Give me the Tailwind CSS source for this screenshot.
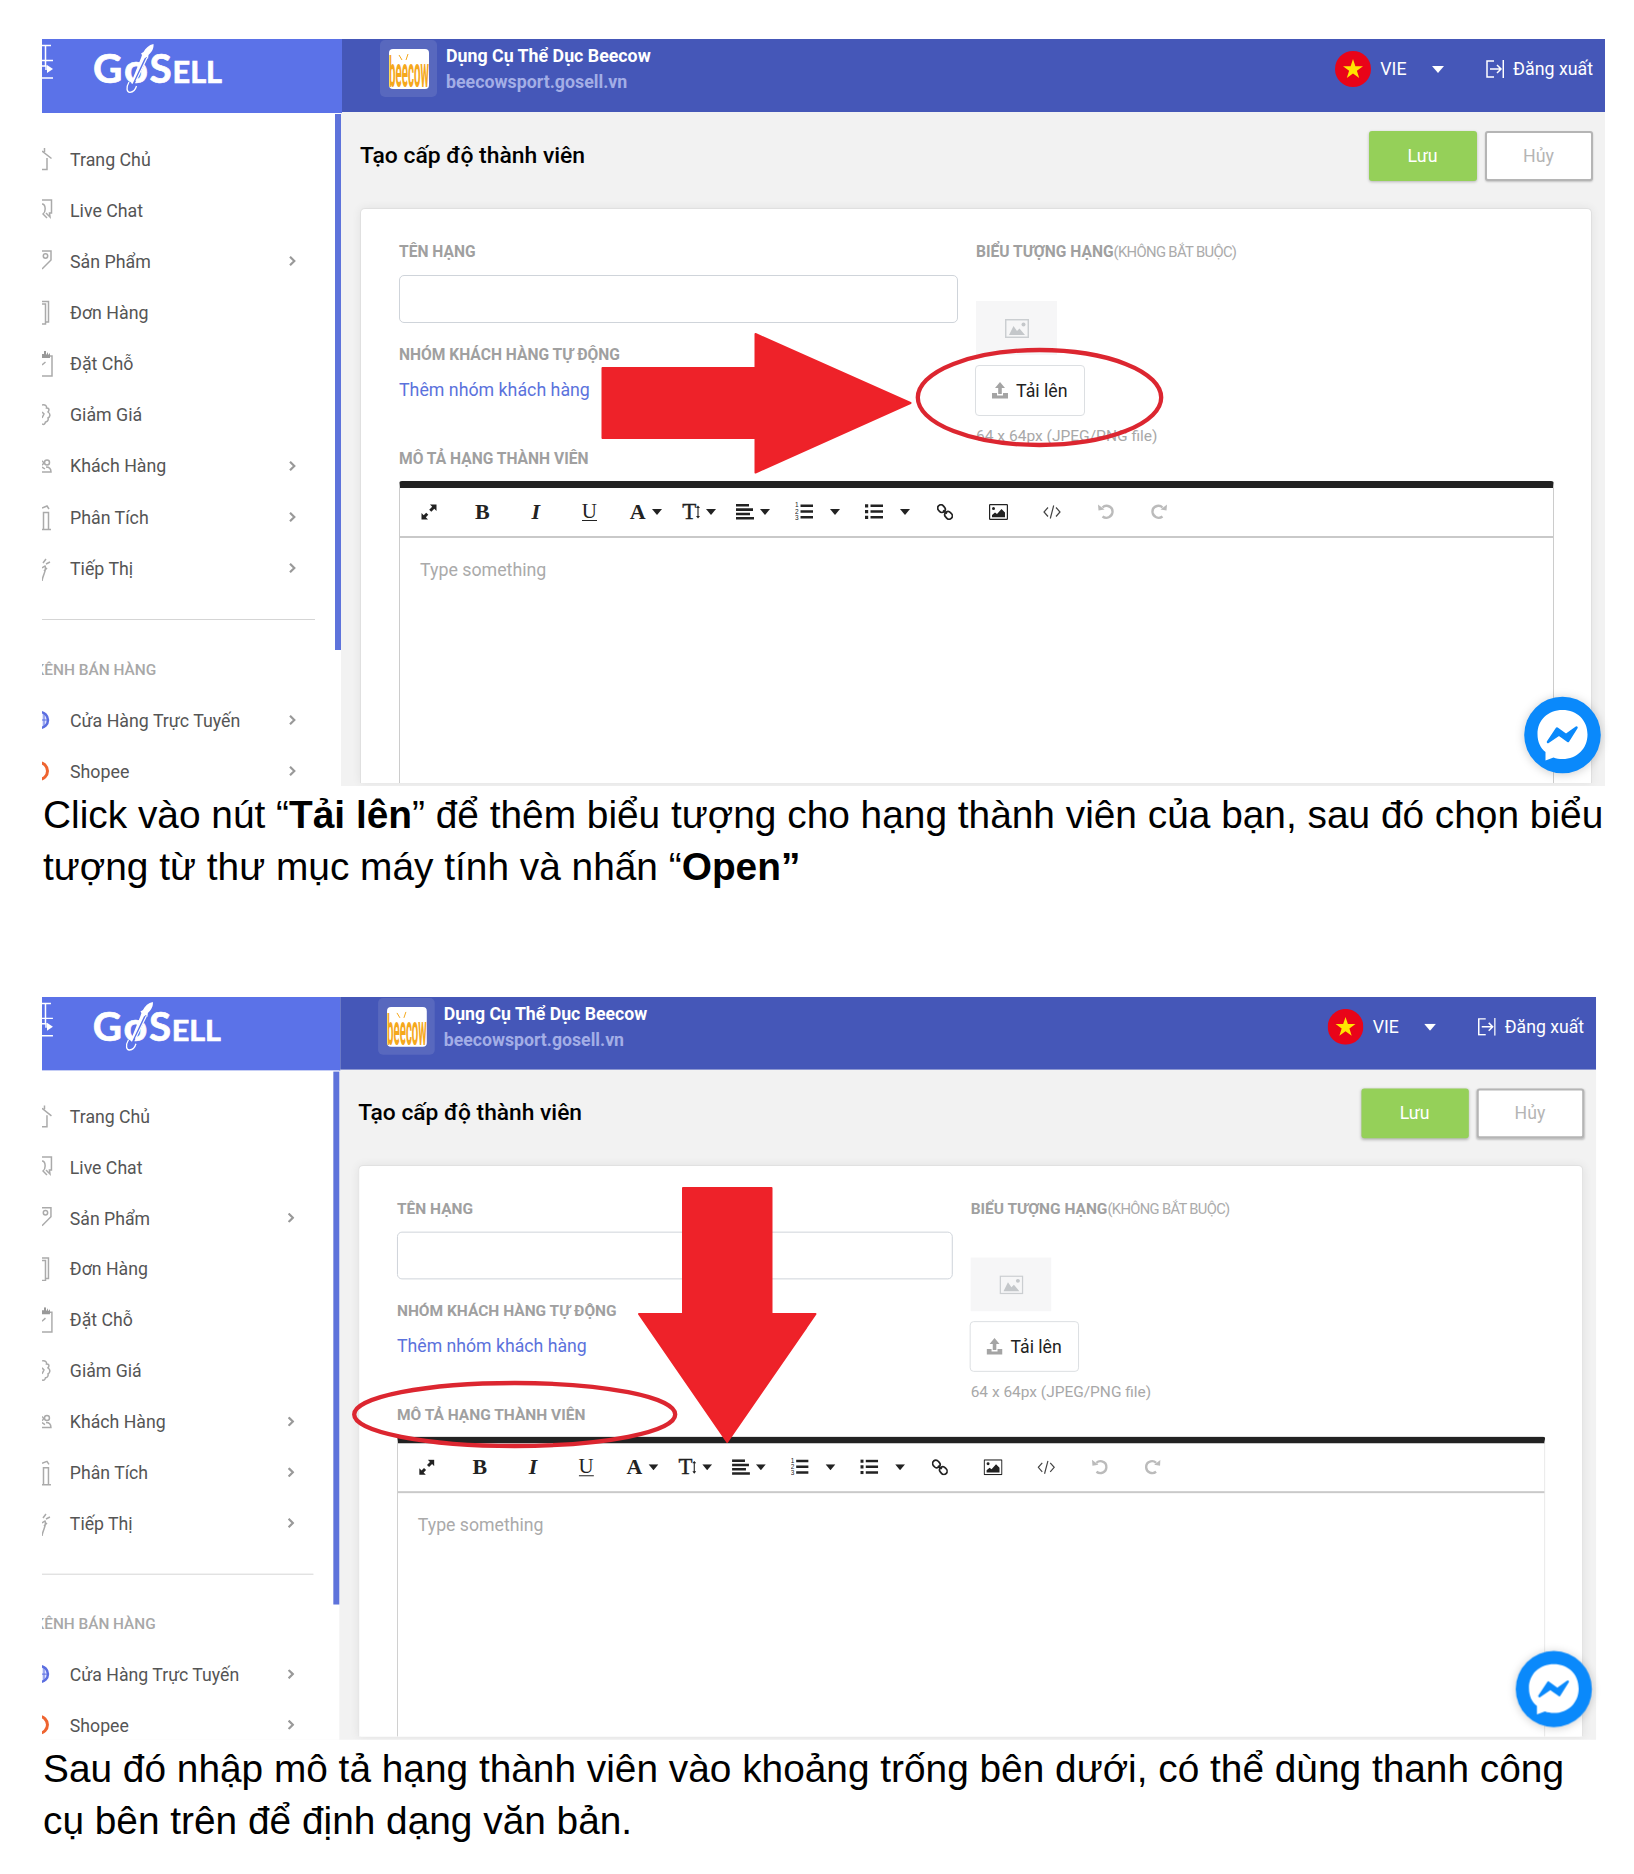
<!DOCTYPE html>
<html lang="vi">
<head>
<meta charset="utf-8">
<title>GoSell - Tạo cấp độ thành viên</title>
<script src="https://cdn.jsdelivr.net/npm/@tailwindcss/browser@4"></script>
</head>
<body class="bg-white w-[1634px] h-[1874px] overflow-hidden">
<main class="flex flex-col pt-[39px] pl-[42px]">

  <section class="relative w-[1563px] h-[747px]">
    <div data-screen></div>
    <svg class="absolute inset-0 w-[1563px] h-[747px]" viewBox="42 39 1563 747">
      <path d="M602.500 368 H755.500 V334 L910.500 403 L755.500 472.500 V438 H602.500Z" fill="#ee2229" stroke="#ee2229" stroke-width="2" stroke-linejoin="round"/>
      <ellipse cx="1039.500" cy="397.500" rx="121.700" ry="47.500" fill="none" stroke="#dc2630" stroke-width="4.300"/>
    </svg>
  </section>

  <p class="mt-[3px] ml-[1px] h-[103px] whitespace-nowrap font-['Liberation_Sans',sans-serif] text-[38.840px] leading-[51.500px] text-black">Click vào nút “<b>Tải lên</b>” để thêm biểu tượng cho hạng thành viên của bạn, sau đó chọn biểu<br>tượng từ thư mục máy tính và nhấn “<b>Open”</b></p>

  <section class="relative mt-[105px] w-[1554px] h-[743px]">
    <div class="origin-top-left scale-[0.9943]" data-screen></div>
    <svg class="absolute inset-0 w-[1554px] h-[743px]" viewBox="42 997 1554 743">
      <ellipse cx="514.700" cy="1414.500" rx="160.500" ry="31.500" fill="none" stroke="#dc2630" stroke-width="4.300"/>
      <path d="M683 1188 H771.500 V1314 H815.500 L727.200 1442 L639 1314 H683Z" fill="#ee2229" stroke="#ee2229" stroke-width="2" stroke-linejoin="round"/>
    </svg>
  </section>

  <p class="mt-[3px] ml-[1px] h-[103px] whitespace-nowrap font-['Liberation_Sans',sans-serif] text-[38.820px] leading-[51.500px] text-black">Sau đó nhập mô tả hạng thành viên vào khoảng trống bên dưới, có thể dùng thanh công<br>cụ bên trên để định dạng văn bản.</p>
</main>

<template id="screen">
  <div class="flex w-[1563px] h-[747px] overflow-hidden bg-[#f2f2f2] font-[Roboto,sans-serif] text-[17.800px] leading-5">
    <!-- sidebar -->
    <aside class="w-[300px] shrink-0 flex flex-col">
      <div class="h-[74px] shrink-0 bg-[#5b72e8]">
        <svg class="w-[200px] h-[74px]" viewBox="0 0 200 74" fill="#fff">
          <g stroke="#fff" stroke-width="1.500" fill="none">
            <path d="M0 6.500H9M3.500 6.500V27M0 21.500H11M0 39H11M0 27H4V31"/>
          </g>
          <path d="M5 26L11 30L5 34Z"/>
          <g font-family="Lato, sans-serif" font-weight="700" stroke="#fff" stroke-width="0.700">
            <text x="51" y="44.300" font-size="40.500">G</text>
            <text x="82" y="44.300" font-size="40.500" textLength="24" lengthAdjust="spacingAndGlyphs">o</text>
            <text x="107.500" y="44.300" font-size="40.500">S</text>
            <text x="130.500" y="44.300" font-size="29.500" textLength="49.500" lengthAdjust="spacingAndGlyphs">ELL</text>
          </g>
          <path d="M88 47L101 20.500L106.500 17.500L92 46Z" fill="#5b72e8"/>
          <path d="M111.500 5C107 6 103.500 9 101.500 13L99 14.500L100 16L99 19L89 44L90.500 45L102.500 19.500L104.500 18L106 20L106.500 16C110 13 112 9 111.500 5Z"/>
          <path d="M94 42L105 19" stroke="#fff" stroke-width="1.200"/>
          <path d="M87 43C83.500 49 85 53.500 88 53.300C91.500 53 93.500 50.500 94.500 47" fill="none" stroke="#fff" stroke-width="1.300"/>
        </svg>
      </div>
      <div class="flex flex-1 justify-between w-[299px] bg-white">
        <nav class="w-[273px] pt-[21px] flex flex-col text-[#555]">
          <div data-items="main" class="flex flex-col"></div>
          <div class="mt-[24.500px] h-px bg-[#d5d5d5]"></div>
          <div class="mt-[40px] h-5 overflow-hidden"><span class="block -ml-[7.500px] text-[15.450px] font-medium text-[#a8a8a8]">KÊNH BÁN HÀNG</span></div>
          <div data-items="channel" class="mt-[15.500px] flex flex-col"></div>
        </nav>
        <div class="w-[6px] h-[536px] mt-[1px] bg-[#5e73db]"></div>
      </div>
    </aside>
    <!-- content -->
    <div class="w-[1263px] shrink-0 flex flex-col">
      <header class="h-[73px] shrink-0 bg-[#4557b8] flex justify-between text-white">
        <div class="flex ml-[38px] mt-[1px]">
          <div class="w-[57px] h-[57px] rounded-[5px] bg-[#5868be] p-[8.500px]">
            <svg class="w-10 h-10 rounded-[4px] bg-white" viewBox="0 0 40 40">
              <text x="0" y="0" transform="translate(0 38) scale(1 3.500)" font-family="Roboto, sans-serif" font-weight="700" font-size="12" textLength="40" lengthAdjust="spacingAndGlyphs" fill="#f5a81c">beecow</text>
              <path d="M10 6L13 11M19 5L17 11" stroke="#f5a81c"/>
            </svg>
          </div>
          <div class="ml-[9px] pt-[6px] flex flex-col gap-[6px] font-bold">
            <span>Dụng Cụ Thể Dục Beecow</span>
            <span class="text-[#a3aee6]">beecowsport.gosell.vn</span>
          </div>
        </div>
        <div class="flex items-center h-[60px] pr-[12px]">
          <svg class="w-9 h-9" viewBox="0 0 36 36"><circle cx="18" cy="18" r="18" fill="#e90419"/><path d="M18 8L20.400 15.200H28L21.900 19.700L24.200 27L18 22.500L11.800 27L14.100 19.700L8 15.200H15.600Z" fill="#ffe600"/></svg>
          <span class="ml-[9px]">VIE</span>
          <svg class="ml-[25.500px] w-3 h-[7px]" viewBox="0 0 12 7"><path d="M0 0H12L6 7Z" fill="#fff"/></svg>
          <svg class="ml-[42px] w-[18px] h-[18px]" viewBox="0 0 18 18" fill="none" stroke="#fff" stroke-width="1.500"><path d="M8 1H1V17H8M4 9H15M11 5L15 9L11 13M17.300 0V18"/></svg>
          <span class="ml-[9px]">Đăng xuất</span>
        </div>
      </header>
      <div class="flex justify-between items-center h-[50px] mt-[19px] ml-[18px] mr-[12.500px]">
        <h1 class="text-[22.900px] font-medium text-black leading-6">Tạo cấp độ thành viên</h1>
        <div class="flex gap-2">
          <div class="w-[108px] h-[50px] rounded-[3px] bg-[#95d059] text-white shadow-[0_1px_3px_rgba(0,0,0,0.25)] flex items-center justify-center">Lưu</div>
          <div class="w-[108px] h-[50px] rounded-[3px] bg-white border-2 border-[#b5b5b5] text-[#b5b5b5] shadow-[0_1px_2px_rgba(0,0,0,0.2)] flex items-center justify-center">Hủy</div>
        </div>
      </div>
      <div class="mt-[27px] ml-[18px] w-[1232px] h-[575px] rounded-t-[5px] bg-white border border-b-0 border-[#e0e0e0] shadow-[0_0_10px_rgba(0,0,0,0.07)] pl-[38px] pt-[33px]">
        <div class="flex gap-[18px] h-[239px] text-[#a0a0a0]">
          <div class="w-[559px]">
            <div class="h-5 text-[15.600px] font-bold">TÊN HẠNG</div>
            <div class="mt-[12.500px] h-12 rounded-[5px] border-[1.500px] border-[#cfd4da] bg-white"></div>
            <div class="mt-[22px] h-5 text-[15.600px] font-bold">NHÓM KHÁCH HÀNG TỰ ĐỘNG</div>
            <div class="mt-[15.500px] h-5 text-[#5b72dc]">Thêm nhóm khách hàng</div>
            <div class="mt-[49px] h-5 text-[15.600px] font-bold">MÔ TẢ HẠNG THÀNH VIÊN</div>
          </div>
          <div>
            <div class="h-5 text-[15.600px] flex items-center"><b>BIỂU TƯỢNG HẠNG</b><span class="text-[14.800px] tracking-[-0.650px] text-[#ababab]">(KHÔNG BẮT BUỘC)</span></div>
            <div class="mt-[39px] w-[81px] h-[54px] bg-[#f6f6f7] flex items-center justify-center">
              <svg class="w-6 h-[19px]" viewBox="0 0 24 19"><rect x="0.700" y="0.700" width="22.600" height="17.600" fill="none" stroke="#cbced1" stroke-width="1.500"/><path d="M4 16L8.500 7L12 12L14.500 9.500L20 16Z" fill="#c4c7ca"/><circle cx="18.500" cy="5.500" r="2" fill="#c4c7ca"/></svg>
            </div>
            <div class="mt-[10px] -ml-[1px] w-[110px] h-[51px] rounded-[4px] border border-[#dcdfe2] bg-white flex items-center pl-4 text-[#222]">
              <svg class="w-4 h-[17px]" viewBox="0 0 16 17" fill="#a4a4a4"><path d="M8 0L13 6H9.800V12H6.200V6H3Z"/><path d="M0 11H5V13.500H11V11H16V16.500H0Z"/></svg>
              <span class="ml-[8px]">Tải lên</span>
            </div>
            <div class="mt-[10px] h-5 text-[15.550px] text-[#a8a8a8] whitespace-nowrap">64 x 64px (JPEG/PNG file)</div>
          </div>
        </div>
        <!-- rich text editor -->
        <div class="w-[1155px] h-[302px] border-t-[7px] border-t-[#222] border-x border-x-[#ccc] rounded-t-[3px]">
          <div class="h-[50px] pb-px border-b-2 border-[#c9c9c9] flex items-center text-[#222] font-['Liberation_Serif',serif] text-[22px] font-bold leading-6 fill-[#222]">
            <div class="ml-[2px] w-[53.500px] flex justify-center"><svg class="w-4 h-4" viewBox="0 0 16 16"><path d="M9 0.500H15.500V7L13.300 4.800L10.300 7.800L8.200 5.700L11.200 2.700ZM7 15.500H0.500V9L2.700 11.200L5.200 8.700L7.300 10.800L4.800 13.300Z"/></svg></div>
            <div class="w-[53.500px] text-center">B</div>
            <div class="w-[53.500px] text-center italic">I</div>
            <div class="w-[53.500px] flex justify-center"><span class="font-normal text-[21px] h-[18px] leading-[16px] border-b-[1.500px] border-[#222]">U</span></div>
            <div class="ml-[3px] w-[53.500px] flex justify-center items-center gap-[6px]"><span>A</span><svg class="w-[10px] h-[6px]" viewBox="0 0 10 6"><path d="M0 0H10L5 6Z"/></svg></div>
            <div class="w-[53.500px] flex justify-center items-center"><span class="font-normal text-[23px] [-webkit-text-stroke:0.4px_#222]">T</span><svg class="w-[4px] h-4 mr-[6px]" viewBox="0 0 5 16"><path d="M2.500 0L5 3H3.200V13H5L2.500 16L0 13H1.800V3H0Z"/></svg><svg class="w-[10px] h-[6px]" viewBox="0 0 10 6"><path d="M0 0H10L5 6Z"/></svg></div>
            <div class="w-[53.500px] flex justify-center items-center gap-[6px]"><svg class="w-[18px] h-4" viewBox="0 0 18 16"><path d="M0 0H13V2.600H0ZM0 4.300H17V6.900H0ZM0 8.700H14V11.300H0ZM0 13H18V15.600H0Z"/></svg><svg class="w-[10px] h-[6px]" viewBox="0 0 10 6"><path d="M0 0H10L5 6Z"/></svg></div>
            <div class="ml-[2px] w-[70px] flex items-center pl-[13px]"><svg class="w-[18px] h-[19px]" viewBox="0 0 18 19"><path d="M5.500 2.500H18V5H5.500ZM5.500 8.300H18V10.800H5.500ZM5.500 14H18V16.500H5.500Z"/><g font-family="Liberation Sans, sans-serif" font-size="6.500" font-weight="400"><text y="5.200">1</text><text y="11.700">2</text><text y="18.200">3</text></g></svg><svg class="ml-[17px] w-[10px] h-[6px]" viewBox="0 0 10 6"><path d="M0 0H10L5 6Z"/></svg></div>
            <div class="w-[67px] flex items-center pl-[13px]"><svg class="w-[18px] h-[15px]" viewBox="0 0 18 15"><path d="M5.500 0.500H18V3H5.500ZM5.500 6.300H18V8.800H5.500ZM5.500 12H18V14.500H5.500Z"/><path d="M0 0.200H3.200V3.400H0ZM0 6H3.200V9.200H0ZM0 11.700H3.200V14.900H0Z"/></svg><svg class="ml-[17px] w-[10px] h-[6px]" viewBox="0 0 10 6"><path d="M0 0H10L5 6Z"/></svg></div>
            <div class="w-[53.500px] flex justify-center"><svg class="w-4 h-4" viewBox="0 0 16 16" fill="none" stroke="#222" stroke-width="1.700"><rect x="1.200" y="0.700" width="6.500" height="8" rx="3.200" transform="rotate(-42 4.400 4.700)"/><rect x="8.300" y="7.300" width="6.500" height="8" rx="3.200" transform="rotate(-42 11.600 11.300)"/><path d="M6 6.500L10 9.500"/></svg></div>
            <div class="w-[53.500px] flex justify-center"><svg class="w-[19px] h-4" viewBox="0 0 19 16"><rect x="0.600" y="0.600" width="17.800" height="14.800" rx="0.600" fill="none" stroke="#222" stroke-width="1.200"/><path d="M3 13.200V11L6 8.500L8 10L12.500 5L16 8.500V13.200Z"/><circle cx="4.500" cy="4.500" r="1.500"/></svg></div>
            <div class="w-[53.500px] flex justify-center"><svg class="w-[18px] h-3.5" viewBox="0 0 18 14" fill="none" stroke="#444" stroke-width="1.200"><path d="M5 2.500L1 7L5 11.500M13 2.500L17 7L13 11.500M10.700 0.500L7.300 13.500"/></svg></div>
            <div class="w-[53.500px] flex justify-center"><svg class="w-4 h-4" viewBox="0 0 16 16"><path d="M4.500 3.500C6 2 8 1.500 10 2C13 2.800 14.700 5.300 14.500 8.200C14 13 8.500 15.500 4.500 12.500" fill="none" stroke="#bbb" stroke-width="2.400"/><path d="M0 0.500L0.500 6.500L6.500 5.500Z" fill="#bbb"/></svg></div>
            <div class="w-[53.500px] flex justify-center"><svg class="w-4 h-4 -scale-x-100" viewBox="0 0 16 16"><path d="M4.500 3.500C6 2 8 1.500 10 2C13 2.800 14.700 5.300 14.500 8.200C14 13 8.500 15.500 4.500 12.500" fill="none" stroke="#bbb" stroke-width="2.400"/><path d="M0 0.500L0.500 6.500L6.500 5.500Z" fill="#bbb"/></svg></div>
          </div>
          <div class="pl-5 pt-[22px] text-[#aaa]">Type something</div>
        </div>
      </div>
    </div>
  </div>
  <!-- chat bubble -->
  <svg class="absolute left-[1474px] top-[648px] w-[92px] h-[96px] drop-shadow-[0_1px_5px_rgba(0,0,0,0.2)]" viewBox="0 0 92 96">
    <circle cx="46.500" cy="48" r="38.300" fill="#0a89fb"/>
    <path d="M46.500 23C32 23 21.500 33 21.500 47C21.500 55 24.500 61 29.500 65V73.500L37.500 70.500C40 71.500 43.500 72 46.500 72C61 72 71.500 61.500 71.500 47.500C71.500 33 61 23 46.500 23Z" fill="#fff"/>
    <path d="M32 55L41 41.500L50 48L60.500 40.500L52 54L43 47.500Z" fill="#0a89fb" stroke="#0a89fb" stroke-width="2.500" stroke-linejoin="round"/>
  </svg>
</template>

<script>
const G = 'stroke="#aaa" stroke-width="1.500"';
const items = {
  main: [
    ['Trang Chủ', `<path ${G} d="M0 4L9.500 11.500M2.500 1V5M5 11V22.500H0"/>`],
    ['Live Chat', `<path ${G} d="M0 2H9.500V15H7.500L8 19L4 15M0 6C4 6 4 14 1 16L5 20"/>`],
    ['Sản Phẩm', `<path ${G} d="M0 2H9V11L0 20"/><circle ${G} cx="3.500" cy="7" r="2.200"/>`],
    ['Đơn Hàng', `<path ${G} d="M0 1.500H6.500V22H3.500M0 4H3.500V24H0"/>`],
    ['Đặt Chỗ', `<path ${G} d="M0 5H10V25H0M0 14L3.500 11"/><path d="M0 7V3H2V0H4V4L6 1V4L8 2V7Z" fill="#999"/>`],
    ['Giảm Giá', `<path ${G} d="M0 3C3 2 5 4 4.500 6C8 6 7 9 6 10C9 12 8 15 6 16C7 19 4 20 3.500 20C3 22 2 23 0 22M0 10L2 12L0 16"/>`],
    ['Khách Hàng', `<circle ${G} cx="5" cy="9.500" r="2.500"/><path ${G} d="M0 8C2 9 2 11 0 12M0 14L3 16M0 19H9C9 15 6 14 4 14"/>`],
    ['Phân Tích', `<path ${G} d="M0 3L5 1L7 4M1.500 24V7.500H6.500V24M0 24.500H9"/>`],
    ['Tiếp Thị', `<path ${G} d="M0 25C1 18 5 14 3 10L0 12M1 7L4 3M4 8L8 6M2 15L5 12"/>`],
  ],
  channel: [
    ['Cửa Hàng Trực Tuyến', `<circle cx="-2" cy="12" r="8" stroke="#5b6ee0" stroke-width="2.500" fill="#dfe4ff"/><path d="M0 12H6M2 6V18" stroke="#5b6ee0"/>`],
    ['Shopee', `<circle cx="-3" cy="12" r="8.500" stroke="#ee6430" stroke-width="3"/>`],
  ],
};
const arrows = ['Sản Phẩm', 'Khách Hàng', 'Phân Tích', 'Tiếp Thị', 'Cửa Hàng Trực Tuyến', 'Shopee'];
const row = ([name, icon]) => `<div class="h-[51.150px] flex items-center">
  <svg class="w-[11px] h-[26px]" viewBox="0 0 11 26" fill="none">${icon}</svg>
  <span class="ml-[17px] flex-1">${name}</span>
  ${arrows.includes(name) ? '<svg class="w-[7px] h-[10px] mr-[19px] mb-[1px]" viewBox="0 0 7 10" fill="none" stroke="#999" stroke-width="2.200"><path d="M1 0.800L5.300 5L1 9.200"/></svg>' : ''}
</div>`;
document.querySelectorAll('[data-screen]').forEach(el => {
  el.append(document.getElementById('screen').content.cloneNode(true));
  el.querySelectorAll('[data-items]').forEach(n => { n.innerHTML = items[n.dataset.items].map(row).join(''); });
});
</script>
</body>
</html>
